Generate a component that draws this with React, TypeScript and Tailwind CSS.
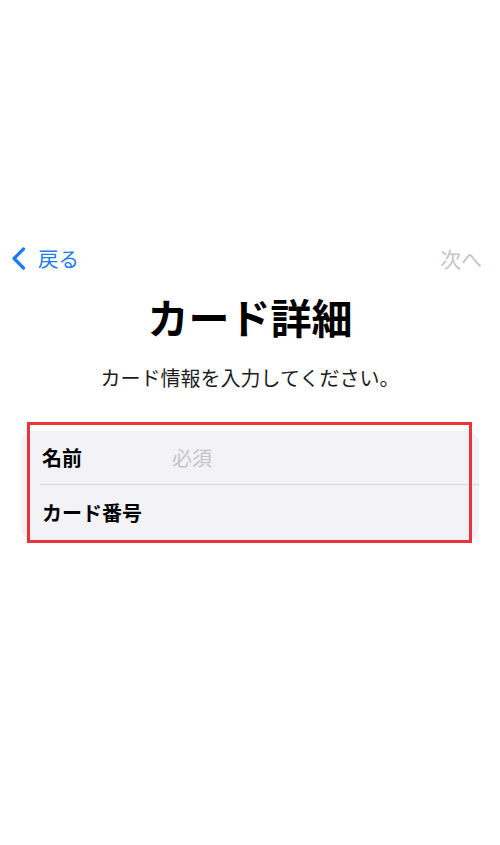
import React from 'react';

const font = { fontFamily: '"Noto Sans CJK JP", "Noto Sans", sans-serif' };

export default function App() {
  return (
    <div className="min-h-[845px] w-[500px] bg-white" style={font}>
      <div className="flex flex-col pt-[238px]">
        {/* Nav bar */}
        <div className="flex h-10 items-center justify-between pl-[11px] pr-[18px]">
          <div className="flex items-center gap-[12px] text-[#1c7cf0]">
            <svg width="15" height="23" viewBox="0 0 15 23" fill="none">
              <path d="M12.5 2 L3 11.5 L12.5 21" stroke="currentColor" strokeWidth="3.2" strokeLinecap="round" strokeLinejoin="round" />
            </svg>
            <span className="text-[20.5px] leading-none">戻る</span>
          </div>
          <span className="text-[21px] leading-none text-[#c4c4c8]">次へ</span>
        </div>

        {/* Heading */}
        <h1 className="mt-[14px] text-center text-[41px] font-bold leading-[48px] text-black">カード詳細</h1>
        <p className="mt-[24px] text-center text-[20px] leading-[28px] text-[#1c1c1e]">カード情報を入力してください。</p>

        {/* Form group */}
        <div className="relative mx-[21px] mt-[39px]">
          <div className="overflow-hidden rounded-[12px] bg-[#f2f2f7]">
            <div className="flex h-[53px] items-center pl-[21px]">
              <span className="w-[130px] text-[20px] font-bold text-black">名前</span>
              <span className="text-[20px] text-[#c4c4c8]">必須</span>
            </div>
            <div className="ml-[19px] h-px bg-[#d8d8dd]" />
            <div className="flex h-[55px] items-center pl-[21px]">
              <span className="text-[20px] font-bold text-black">カード番号</span>
            </div>
          </div>
          {/* highlight */}
          <div className="pointer-events-none absolute -top-[9px] -bottom-[3px] left-[6px] right-[7px] border-[3px] border-[#e8353b]" />
        </div>
      </div>
    </div>
  );
}
